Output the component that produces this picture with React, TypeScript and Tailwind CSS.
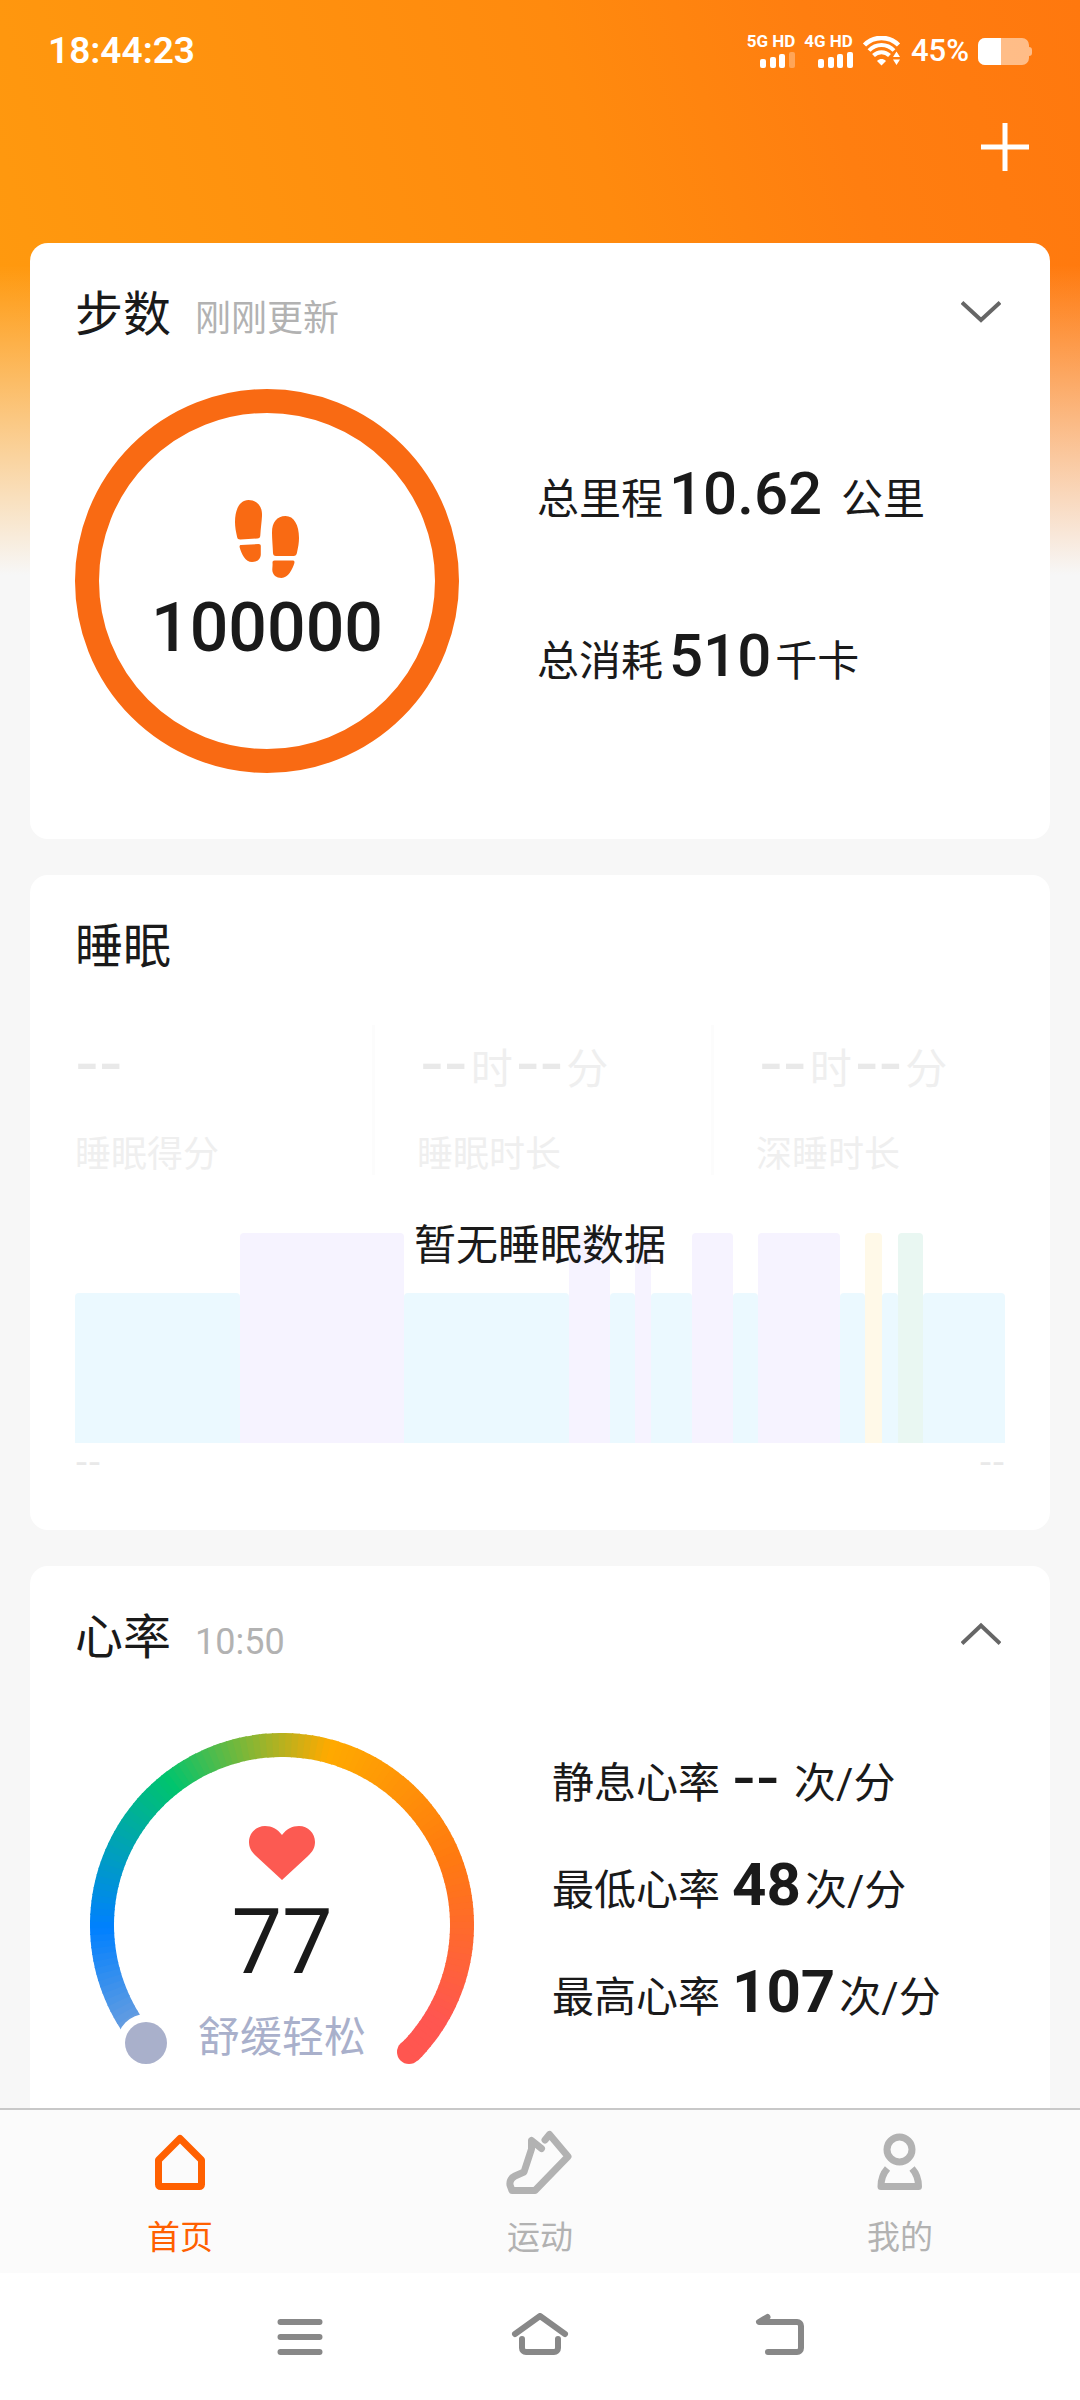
import type { ReactNode } from 'react'

// Tramos de sueño de ejemplo: [peso, tipo]
type Stage = 'light' | 'deep' | 'awake' | 'rem'

const stages: [number, Stage][] = [
  [20, 'light'],
  [20, 'deep'],
  [20, 'light'],
  [5, 'deep'],
  [3, 'light'],
  [2, 'deep'],
  [5, 'light'],
  [5, 'deep'],
  [3, 'light'],
  [10, 'deep'],
  [3, 'light'],
  [2, 'awake'],
  [2, 'light'],
  [3, 'rem'],
  [10, 'light'],
]

const stageStyles: Record<Stage, string> = {
  light: 'h-[150px] bg-[#ebf9ff]',
  deep: 'h-[210px] bg-[#f6f3ff]',
  awake: 'h-[210px] bg-[#fff9e8]',
  rem: 'h-[210px] bg-[#e9f7f2]',
}

// Paradas del degradado del arco (ángulo en grados, color rgb).
const arcStops: [number, [number, number, number]][] = [
  [126, [169, 176, 203]],
  [179, [0, 128, 255]],
  [232, [0, 196, 110]],
  [285, [255, 170, 0]],
  [338, [255, 122, 16]],
  [391, [255, 86, 80]],
  [406, [255, 86, 80]],
]

function arcColor(angle: number): string {
  const i = Math.max(1, arcStops.findIndex(([a]) => a >= angle))
  const [a0, c0] = arcStops[i - 1]
  const [a1, c1] = arcStops[i]
  const t = (angle - a0) / (a1 - a0)
  return `rgb(${c0.map((v, k) => Math.round(v + (c1[k] - v) * t)).join(',')})`
}

function arcPoint(angle: number): string {
  const rad = (angle * Math.PI) / 180
  return `${192 + 180 * Math.cos(rad)} ${192 + 180 * Math.sin(rad)}`
}

function HeartArc() {
  const parts: number[] = []
  for (let a = 139; a < 405; a += 2) parts.push(a)
  return (
    <svg viewBox="0 0 384 384" className="absolute inset-0 size-full" fill="none" aria-hidden="true">
      <circle cx="319" cy="319" r="12" fill="#ff5650" />
      {parts.map((a) => (
        <path
          key={a}
          d={`M${arcPoint(a)}A180 180 0 0 1 ${arcPoint(Math.min(a + 2.4, 405))}`}
          stroke={arcColor(a + 1)}
          strokeWidth="24"
        />
      ))}
      <circle cx="56" cy="310" r="29" fill="#fff" />
      <circle cx="56" cy="310" r="21" fill="#a9b0cb" />
    </svg>
  )
}

function Signal({ label, last }: { label: string; last: string }) {
  return (
    <div className="flex flex-col items-end gap-1">
      <span className="text-[17px] leading-[14px] font-bold">{label}</span>
      <svg width="35" height="16" viewBox="0 0 35 16" fill="currentColor" aria-hidden="true">
        <rect x="0" y="7" width="6" height="9" rx="2" />
        <rect x="10" y="5" width="6" height="11" rx="2" />
        <rect x="19" y="2" width="6" height="14" rx="2" />
        <rect x="29" y="0" width="6" height="16" rx="2" className={last} />
      </svg>
    </div>
  )
}

function StatusBar() {
  return (
    <div className="flex h-[100px] items-center justify-between pt-0.5 pr-12 pl-12 text-white">
      <span className="text-[37px] font-semibold">18:44:23</span>
      <div className="flex items-center gap-[9px]">
        <Signal label="5G HD" last="opacity-30" />
        <Signal label="4G HD" last="opacity-100" />
        <svg width="40" height="30" viewBox="0 0 40 30" fill="none" stroke="currentColor" aria-hidden="true">
          <path d="M2.500 9C12-.5 27-.5 36.500 9" strokeWidth="4.500" />
          <path d="M7 14.500C14 7 25 7 32 14.500" strokeWidth="4" />
          <path d="M11.500 19.500C16 15 23 15 27.500 19.500" strokeWidth="4" />
          <path d="M19.500 29.500l-4.500-4.500c3-2.600 6-2.600 9 0z" fill="currentColor" stroke="none" />
          <path d="M31 21l3.500-5.500 3.500 5.500zM31 23.500l3.500 5.500 3.500-5.500z" fill="currentColor" stroke="none" />
        </svg>
        <span className="text-[31px] leading-9 font-medium">45%</span>
        <svg width="54" height="27" viewBox="0 0 54 27" aria-hidden="true">
          <path
            d="M7 0H44a7 7 0 0 1 7 7v2a3 3 0 0 1 3 3v3a3 3 0 0 1-3 3v2a7 7 0 0 1-7 7H7a7 7 0 0 1-7-7V7a7 7 0 0 1 7-7z"
            fill="#fff"
            fillOpacity="0.5"
          />
          <path d="M7 0H23V27H7a7 7 0 0 1-7-7V7a7 7 0 0 1 7-7z" fill="#fff" />
        </svg>
      </div>
    </div>
  )
}

interface CardProps {
  title: string
  subtitle?: string
  chevron?: 'up' | 'down'
  children: ReactNode
}

function Card({ title, subtitle, chevron, children }: CardProps) {
  return (
    <section className="shrink-0 rounded-[18px] bg-white px-[45px] pt-[41px]">
      <div className="flex h-[62px] items-center">
        <h2 className="text-5xl">{title}</h2>
        {subtitle && <span className="mt-2 ml-6 text-4xl text-[#b2b2b2]">{subtitle}</span>}
        {chevron && (
          <button type="button" aria-label={chevron === 'up' ? '收起' : '展开'} className="ml-auto pr-1 pb-2">
            <svg width="40" height="24" viewBox="0 0 40 24" fill="none" stroke="#666" strokeWidth="4" aria-hidden="true">
              <path d={chevron === 'up' ? 'M1 21.500L20 3.500L39 21.500' : 'M1 3.500L20 21L39 3.500'} />
            </svg>
          </button>
        )}
      </div>
      {children}
    </section>
  )
}

// Marcador de valor ausente.
function Dash() {
  return <span className="font-['DejaVu_Sans',sans-serif] text-[66px] leading-[54px] font-normal">--</span>
}

interface StatProps {
  label: string
  value: ReactNode
  unit: string
  bold?: boolean
}

function Stat({ label, value, unit, bold }: StatProps) {
  return (
    <div className="flex h-[60px] items-baseline text-[42px] leading-[60px] whitespace-pre">
      <span>{label}</span>
      <span className={`mr-1 text-[60px] ${bold ? 'ml-3 font-bold' : 'ml-1.5 font-medium'}`}>{value}</span>
      <span>{unit}</span>
    </div>
  )
}

function StepsCard() {
  return (
    <Card title="步数" subtitle="刚刚更新" chevron="down">
      <div className="mt-[43px] flex gap-[78px] pb-[66px]">
        <div className="flex size-96 shrink-0 flex-col items-center rounded-full border-24 border-[#f96a13] pt-[87px]">
          <svg width="64" height="78" viewBox="0 0 64 78" fill="#f96a13" aria-hidden="true">
            <path d="M13.500 0C22 0 27.500 6 27 16c-.3 6-1.300 12-1.700 19.500-.1 2-1 2.900-3 3L5.500 39.500c-2 .1-3-.6-3.400-2.500C.8 31 0 27 0 22 0 9 5 0 13.500 0z" />
            <path d="M6 45l17.500-1c1.700 0 2.500 1 2.300 2.500v8c-.2 5-4 7.500-8.800 7.500-6.500 0-10.500-8-12.300-14.500-.3-1.500 0-2.500 1.300-2.500z" />
            <path d="M50.500 16C59 16 64 25 64 38c0 5-.8 9-2.100 15-.4 1.900-1.400 2.900-3.400 2.900H41c-2 0-2.900-1-3-3-.3-7.500-1-14.500-1-20.500 0-10 5-16.400 13.500-16.400z" />
            <path d="M39.500 60.500H58c1.300 0 1.700 1 1.400 2.500C57.500 69.500 53 78 46.500 78c-5 0-9-3-9.200-8 0-2.500.5-5 .2-7.500 0-1.300.7-2 2-2z" />
          </svg>
          <span className="mt-[15px] text-[68px] leading-[70px] font-medium">100000</span>
        </div>
        <div className="flex flex-col gap-[102px] pt-[75px]">
          <Stat label="总里程" value="10.62 " unit="公里" />
          <Stat label="总消耗" value="510" unit="千卡" />
        </div>
      </div>
    </Card>
  )
}

function SleepValue({ label }: { label: string }) {
  return (
    <div className="border-l-3 border-[#fcfcfc] pt-[10px] pl-[42px]">
      <div className="flex h-[60px] items-baseline text-[42px] leading-[60px]">
        <span className="px-[3px] text-[#e9e9e9]">
          <Dash />
        </span>
        时
        <span className="px-[3px] text-[#e9e9e9]">
          <Dash />
        </span>
        分
      </div>
      <div className="mt-10 text-4xl leading-10">{label}</div>
    </div>
  )
}

function SleepCard() {
  return (
    <Card title="睡眠">
      <div className="relative pb-[51px]">
        <div className="mt-[47px] grid grid-cols-[297fr_339fr_294fr] text-[#efefef]">
          <div className="pt-[10px]">
            <div className="flex h-[60px] text-[#e9e9e9]">
              <Dash />
            </div>
            <div className="mt-10 text-4xl leading-10">睡眠得分</div>
          </div>
          <SleepValue label="睡眠时长" />
          <SleepValue label="深睡时长" />
        </div>
        <div className="mt-[58px] flex items-end">
          {stages.map(([weight, stage], i) => (
            <div key={i} style={{ flexGrow: weight }} className={`basis-0 rounded-t-[4px] ${stageStyles[stage]}`} />
          ))}
        </div>
        <div className="flex h-9 items-center justify-between font-['DejaVu_Sans',sans-serif] text-4xl text-[#e9e9e9]">
          <span>--</span>
          <span>--</span>
        </div>
        <p className="absolute inset-x-0 top-[191px] text-center text-[42px] leading-[60px]">暂无睡眠数据</p>
      </div>
    </Card>
  )
}

function HeartCard() {
  return (
    <Card title="心率" subtitle="10:50" chevron="up">
      <div className="mt-16 ml-[15px] flex gap-[78px] pb-[66px]">
        <div className="relative flex size-96 shrink-0 flex-col items-center pt-[93px]">
          <HeartArc />
          <svg width="66" height="54" viewBox="0 0 66 54" fill="#fc5a52" aria-hidden="true">
            <path d="M33 54L7 30C2 25.500 0 21 0 16 0 7 7 0 16 0c7 0 12.500 3 17 9 4.500-6 10-9 17-9 9 0 16 7 16 16 0 5-2 9.500-7 14z" />
          </svg>
          <span className="mt-[18px] text-[90px] leading-[90px]">77</span>
          <span className="mt-[25px] text-[42px] leading-[50px] text-[#a9b0cb]">舒缓轻松</span>
        </div>
        <div className="flex flex-col gap-[47px] pt-[15px]">
          <Stat label="静息心率" value={<Dash />} unit=" 次/分" bold />
          <Stat label="最低心率" value="48" unit="次/分" bold />
          <Stat label="最高心率" value="107" unit="次/分" bold />
        </div>
      </div>
    </Card>
  )
}

function TabBar() {
  return (
    <nav className="grid h-[165px] shrink-0 grid-cols-3 border-t-2 border-[#c8c8c8] bg-[#fbfbfb] text-[33px] text-[#b2b2b2]">
      <a href="#home" className="flex flex-col items-center gap-[18px] pt-5 text-[#ff6000]">
        <svg width="72" height="66" viewBox="0 0 72 66" fill="none" stroke="currentColor" strokeWidth="7" strokeLinejoin="round" aria-hidden="true">
          <path d="M36 8.500L57.500 30V54.500a2 2 0 0 1-2 2H16.500a2 2 0 0 1-2-2V30z" />
        </svg>
        <span className="leading-[48px]">首页</span>
      </a>
      <a href="#sport" className="flex flex-col items-center gap-[18px] pt-5">
        <svg width="72" height="66" viewBox="0 0 72 66" fill="none" stroke="currentColor" strokeWidth="7" strokeLinejoin="round" strokeLinecap="round" aria-hidden="true">
          <path d="M37.500 18.500L27.500 10.500V19L20 42l-9 4c-4 2-5.500 5-5 9L8 60.500H31L64 26.500 45.500 4.500 41 10" />
        </svg>
        <span className="leading-[48px]">运动</span>
      </a>
      <a href="#me" className="flex flex-col items-center gap-[18px] pt-5">
        <svg width="72" height="66" viewBox="0 0 72 66" fill="none" stroke="currentColor" strokeWidth="7" strokeLinejoin="round" aria-hidden="true">
          <circle cx="35.500" cy="19.500" r="12.500" />
          <path d="M23.500 38.500C18.500 44 17 50 17 56.500H54.500C54.500 50 53 44 48 38.500" />
        </svg>
        <span className="leading-[48px]">我的</span>
      </a>
    </nav>
  )
}

function SystemNav() {
  return (
    <div className="grid h-[127px] shrink-0 grid-cols-3 items-center bg-white px-[180px] text-[#888]">
      <button type="button" aria-label="最近任务" className="flex justify-center">
        <svg width="60" height="48" viewBox="0 0 60 48" fill="none" stroke="currentColor" strokeWidth="6" strokeLinecap="round" aria-hidden="true">
          <path d="M10.500 9H49.500M10.500 24H49.500M10.500 39H49.500" />
        </svg>
      </button>
      <button type="button" aria-label="主屏幕" className="flex justify-center">
        <svg width="60" height="48" viewBox="0 0 60 48" fill="none" stroke="currentColor" strokeWidth="6" strokeLinecap="round" strokeLinejoin="round" aria-hidden="true">
          <path d="M5 21L30 3L55 21M12 26v9a4 4 0 0 0 4 4H44a4 4 0 0 0 4-4v-9" />
        </svg>
      </button>
      <button type="button" aria-label="返回" className="flex justify-center">
        <svg width="60" height="48" viewBox="0 0 60 48" fill="none" stroke="currentColor" strokeWidth="6" strokeLinecap="round" strokeLinejoin="round" aria-hidden="true">
          <path d="M17.500 4L9 9H47a4 4 0 0 1 4 4V35a4 4 0 0 1-4 4H18" />
        </svg>
      </button>
    </div>
  )
}

export default function App() {
  return (
    <div className="flex h-screen flex-col bg-[#f7f7f7] bg-[linear-gradient(to_bottom,transparent_265px,#f7f7f7_575px),linear-gradient(72deg,#ff990e_8%,#ff8a0e_58%,#ff7e10_78%,#ff780e)] bg-size-[100%_100%,100%_600px] bg-no-repeat font-[Roboto,'Noto_Sans_CJK_SC',sans-serif] text-[#1a1a1a]">
      <StatusBar />
      <header className="flex h-[143px] shrink-0 items-start justify-end pt-[23px] pr-[51px]">
        <button type="button" aria-label="添加">
          <svg width="48" height="48" viewBox="0 0 48 48" stroke="#fff" strokeWidth="5" aria-hidden="true">
            <path d="M24 0V48M0 24H48" />
          </svg>
        </button>
      </header>
      <main className="flex min-h-0 flex-1 flex-col gap-9 overflow-hidden px-[30px]">
        <StepsCard />
        <SleepCard />
        <HeartCard />
      </main>
      <TabBar />
      <SystemNav />
    </div>
  )
}
